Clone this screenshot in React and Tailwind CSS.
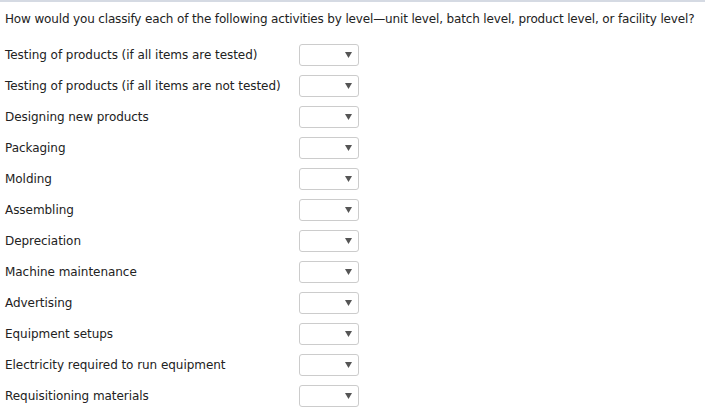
const items = [
  'Testing of products (if all items are tested)',
  'Testing of products (if all items are not tested)',
  'Designing new products',
  'Packaging',
  'Molding',
  'Assembling',
  'Depreciation',
  'Machine maintenance',
  'Advertising',
  'Equipment setups',
  'Electricity required to run equipment',
  'Requisitioning materials',
]

function LevelSelect() {
  return (
    <div className="w-[60px] h-[22px] bg-white border border-[#cccccc] rounded-[3px] flex items-center justify-end pr-[6px]">
      <svg width="7" height="6" viewBox="0 0 7 6">
        <path d="M0 0 H7 L3.5 6 Z" fill="#555" />
      </svg>
    </div>
  )
}

export default function App() {
  return (
    <div className="w-[705px] h-[418px] bg-white border-t-2 border-[#d5dae3] text-[#222] text-[12px] font-['DejaVu_Sans',sans-serif] overflow-hidden">
      <p className="pl-[5px] pt-[10px] leading-[15px] tracking-[-0.15px] whitespace-nowrap">
        How would you classify each of the following activities by level—unit level, batch level, product level, or facility level?
      </p>
      <div className="pl-[5px] pt-[17px] flex flex-col gap-[9px]">
        {items.map((item) => (
          <div key={item} className="flex items-center">
            <span className="w-[294px] leading-[15px] tracking-[-0.05px]">{item}</span>
            <LevelSelect />
          </div>
        ))}
      </div>
    </div>
  )
}
